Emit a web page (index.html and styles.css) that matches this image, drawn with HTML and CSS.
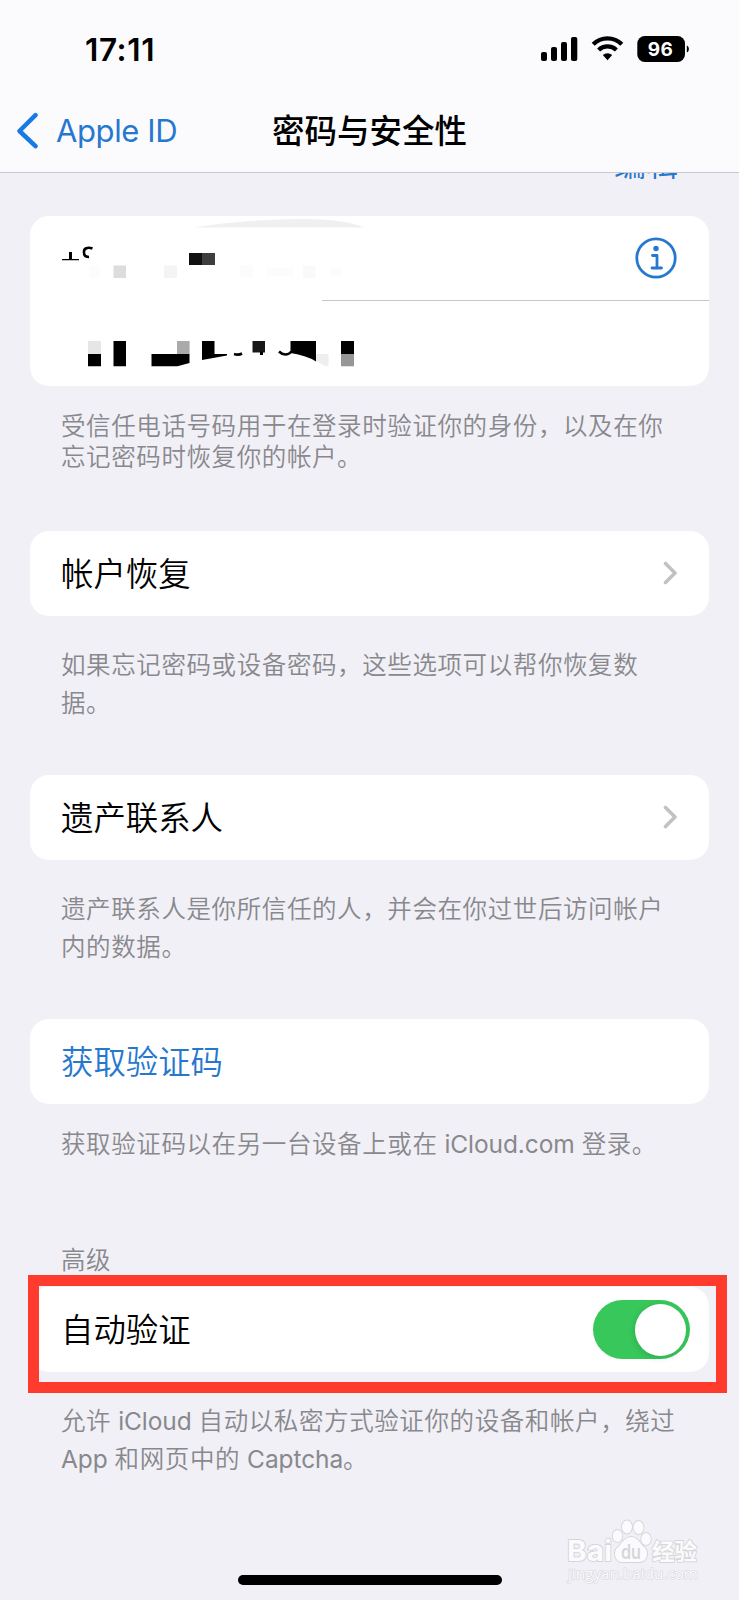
FILE: index.html
```html
<!DOCTYPE html>
<html lang="zh-CN">
<head>
<meta charset="utf-8">
<title>密码与安全性</title>
<link rel="stylesheet" href="styles.css">
</head>
<body>
<div class="screen">
  <header class="top">
    <div class="status">
      <span class="time">17:11</span>
      <svg class="status-icons" width="150" height="28" viewBox="0 0 150 28">
        <rect x="1" y="16" width="6" height="9" rx="2"/>
        <rect x="11" y="11" width="6" height="14" rx="2"/>
        <rect x="21" y="6" width="6" height="19" rx="2"/>
        <rect x="31" y="1" width="6.3" height="24" rx="2"/>
        <g fill="none" stroke="#000" stroke-width="4.2">
          <path d="M53.2 8.3a20 20 0 0 1 28.6 0"/>
          <path d="M58.6 14a12.8 12.8 0 0 1 17.8 0"/>
        </g>
        <path d="M62.8 19a7.2 7.2 0 0 1 9.4 0l-4.700 5.300z"/>
        <rect x="97.3" y="0" width="47.7" height="26" rx="7.5"/>
        <path d="M146.8 9.500c2.800 1 2.800 6 0 7z"/>
        <text class="level" x="120.500" y="20" text-anchor="middle">96</text>
      </svg>
    </div>
    <nav class="nav">
      <a class="back">
        <svg width="22" height="38" viewBox="0 0 22 38"><path d="M19.500 3.200 3.500 19l16 15.200"/></svg>
        <span>Apple ID</span>
      </a>
      <h1 class="title">密码与安全性</h1>
    </nav>
  </header>
  <main class="content">
    <div class="edit">编辑</div>

    <section class="card phones">
      <svg class="phone-mask" width="679" height="171" viewBox="30 215 679 171">
        <path fill="#f0f0f0" d="M194 227.500C225 222 270 219 306 219c28 0 48 4 58 8.500z"/>
        <path d="M62 259h17v1.200H62zM69 252h3v8h-3z"/>
        <path class="arc" d="M92.500 248.500c-5-2-9 0-8.500 4 0 3 2 4.500 5 4.500"/>
        <path fill="#111" d="M189 253h13v12h-13z"/><path fill="#3e3e3e" d="M202 253h13v12h-13z"/>
        <path fill="#ddd" d="M113.500 265.500H126V278h-12.500z"/>
        <path fill="#f4f4f4" d="M164 265.500h13V278h-13z"/>
        <path fill="#f9f9f9" d="M303 265.500h12.500V278H303z"/>
        <path fill="#fcfcfc" d="M89 265.500h11V278H89zM240 265.500h13V278h-13zM267 268h26v8h-26zM330 268h12v8h-12z"/>
        <path fill="#e6e6e6" d="M88 341h13v13H88z"/>
        <path d="M88 354h13v12.300H88zM113.500 341H126v25.300h-12.500zM151.500 354h38v9l-12 3.300h-26z"/>
        <path fill="#aaa" d="M177 341h12.600v13H177z"/>
        <path d="M202 341h12.500v13H227v1.500L202 360z"/>
        <path class="arc" d="M234 354q4.500 1.500 8-.5"/>
        <path fill="#181818" d="M252.500 341H265v11.500h-12.500z"/><path d="M260 351.500h3v3.500h-3z"/>
        <path class="arc" d="M279 351.500c4 4 9 4 12.500 0"/>
        <path d="M290.500 341H316v20.500q-9-6-25.500-8.500z"/>
        <path fill="#eee" d="M316 354h12.500v12H325l-9-5z"/>
        <path d="M341 341h13v13h-13z"/><path fill="#969696" d="M341 354h13v12.300h-13z"/>
      </svg>
      <div class="phone-row">
        <svg width="42" height="42" viewBox="0 0 42 42" class="info">
          <circle cx="21" cy="21" r="19.200"/>
          <path d="M17.500 18.500h4.500v12.500M17 31h9.500"/>
          <circle class="dot" cx="21" cy="11.500" r="2.700"/>
        </svg>
      </div>
      <div class="divider"></div>
    </section>
    <p class="note tight">受信任电话号码用于在登录时验证你的身份，以及在你<br>忘记密码时恢复你的帐户。</p>

    <section class="card row recovery">
      <span>帐户恢复</span>
      <svg class="chevron" width="15" height="24" viewBox="0 0 15 24"><path d="M2.500 2.500 12 12l-9.500 9.500"/></svg>
    </section>
    <p class="note">如果忘记密码或设备密码，这些选项可以帮你恢复数<br>据。</p>

    <section class="card row legacy">
      <span>遗产联系人</span>
      <svg class="chevron" width="15" height="24" viewBox="0 0 15 24"><path d="M2.500 2.500 12 12l-9.500 9.500"/></svg>
    </section>
    <p class="note">遗产联系人是你所信任的人，并会在你过世后访问帐户<br>内的数据。</p>

    <section class="card row code"><span>获取验证码</span></section>
    <p class="note single">获取验证码以在另一台设备上或在<span class="latin"> iCloud.com </span>登录。</p>

    <h2 class="note label">高级</h2>
    <section class="card row auto">
      <span>自动验证</span>
      <span class="toggle"><span class="knob"></span></span>
      <div class="highlight"></div>
    </section>
    <p class="note">允许<span class="latin"> iCloud </span>自动以私密方式验证你的设备和帐户，绕过<br><span class="latin">App </span>和网页中的<span class="latin"> Captcha</span>。</p>
  </main>
  <div class="home"></div>
  <svg class="watermark" width="140" height="70" viewBox="0 0 140 70">
    <g class="wm-shape">
      <ellipse cx="50.500" cy="17" rx="4.800" ry="6"/><ellipse cx="60" cy="8" rx="5" ry="6.500"/>
      <ellipse cx="71.500" cy="8.500" rx="5" ry="6.500"/><ellipse cx="79" cy="20" rx="4.800" ry="6"/>
      <path d="M64 18c7 0 9 7 14 11 4 4 2 14-5 14H55c-7 0-9-10-5-14 5-4 7-11 14-11z"/>
    </g>
    <text class="wm-big" x="0" y="42" textLength="45" lengthAdjust="spacingAndGlyphs">Bai</text>
    <text class="wm-du" x="54" y="40" textLength="20" lengthAdjust="spacingAndGlyphs">du</text>
    <text class="wm-cn" x="85" y="40.500" textLength="45" lengthAdjust="spacingAndGlyphs">经验</text>
    <text class="wm-url" x="1" y="60" textLength="130" lengthAdjust="spacingAndGlyphs">jingyan.baidu.com</text>
  </svg>
</div>
</body>
</html>
```
FILE: styles.css
```css
* { box-sizing: border-box; }
body {
  margin: 0;
  background: #f1f0f6;
  color: #000;
  font-family: Inter, "Noto Sans CJK SC", sans-serif;
}
.screen { position: relative; width: 739px; height: 1600px; overflow: hidden; }
.top { height: 173px; background: #fbfbfd; border-bottom: 1px solid #c9c9ce; }
.status { display: flex; justify-content: space-between; padding: 36px 49px 0 85px; height: 90px; }
.time { font-size: 31.500px; font-weight: 600; line-height: 28px; letter-spacing: 0.6px; }
.level { fill: #fff; font-size: 19px; font-weight: 650; letter-spacing: 0.4px; }
.nav { display: grid; grid-template-columns: 1fr auto 1fr; align-items: center; height: 82px; padding: 0 16px; }
.back { display: flex; align-items: center; gap: 18px; color: #2678cf; font-size: 31px; line-height: 38px; letter-spacing: -0.4px; }
.back path { fill: none; stroke: #187be5; stroke-width: 4.5; stroke-linecap: round; stroke-linejoin: round; }
.title { margin: 2px 0 0; font-size: 32.500px; line-height: 48px; font-weight: 500; }
.content { overflow: hidden; height: 1390px; padding: 0 30px; }
.edit { margin: -32px 31px 27px 0; text-align: right; color: #2678cf; font-size: 32px; line-height: 48px; }
.card { position: relative; width: 679px; background: #fff; border-radius: 19px; }
.phones { height: 170px; }
.phone-mask { position: absolute; left: 0; top: -1px; }
.phone-row { display: flex; justify-content: flex-end; align-items: center; height: 84px; padding-right: 32px; }
.info { fill: none; stroke: #2678cf; stroke-width: 2.8; stroke-linecap: round; stroke-linejoin: round; }
.info .dot { fill: #2678cf; stroke: none; }
.divider { height: 1px; margin-left: 292px; background: #c6c6c8; }
.arc { fill: none; stroke: #000; stroke-width: 2.6; }
.note { margin: 30px 0 53px 31px; font-size: 24.500px; line-height: 38px; font-weight: 350; letter-spacing: 0.6px; color: #88888d; white-space: nowrap; }
.latin { font-weight: 400; letter-spacing: -0.1px; word-spacing: 0.2px; }
.tight { margin: 25px 0 59px 31px; line-height: 30.500px; }
.single { margin: 21px 0 78px 31px; }
.label { margin: 0 0 8px 31px; }
.row { display: flex; align-items: center; justify-content: space-between; height: 85px; padding: 0 31px; font-size: 32.400px; line-height: 48px; font-weight: 350; }
.row > span:first-child { padding-top: 2px; }
.chevron { margin-top: -2px; fill: none; stroke: #c2c2c5; stroke-width: 3.6; stroke-linecap: round; stroke-linejoin: round; }
.code { color: #2678cf; }
.auto { padding-right: 19px; }
.toggle { display: flex; justify-content: flex-end; align-items: center; width: 97px; height: 59px; padding-right: 4px; border-radius: 30px; background: #37c75b; }
.knob { width: 51px; height: 52px; border-radius: 50%; background: #fff; box-shadow: -1px 2px 6px rgba(0, 0, 0, 0.12); }
.highlight { position: absolute; left: -2px; top: -12px; width: 699px; height: 118px; border: 11px solid #fe3b2d; }
.home { position: absolute; left: 238px; top: 1575px; width: 264px; height: 10px; border-radius: 5px; background: #000; }
.watermark { position: absolute; left: 567px; top: 1519px; overflow: visible; }
.wm-shape, .wm-big, .wm-cn, .wm-url { fill: #fbfbfd; stroke: #d6d6da; stroke-width: 1.8; paint-order: stroke; }
.wm-big { font-size: 29px; font-weight: 700; }
.wm-du { font-size: 20px; font-weight: 600; fill: #d6d6da; }
.wm-cn { font-size: 23px; font-weight: 700; }
.wm-url { font-family: "Open Sans", sans-serif; font-size: 15px; stroke-width: 1.2; }
```
